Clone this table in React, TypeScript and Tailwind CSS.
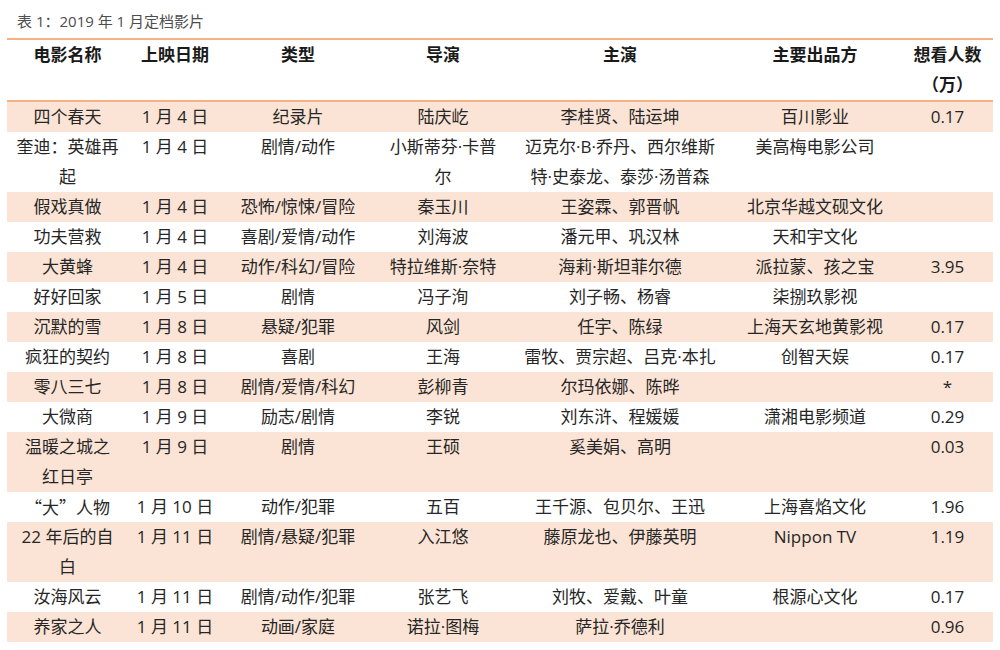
const headers = ['电影名称', '上映日期', '类型', '导演', '主演', '主要出品方', '想看人数\n（万）'];

// each row: name, date, genre, director, cast, studio, want
const rows: string[][] = [
  ['四个春天', '1 月 4 日', '纪录片', '陆庆屹', '李桂贤、陆运坤', '百川影业', '0.17'],
  ['奎迪：英雄再\n起', '1 月 4 日', '剧情/动作', '小斯蒂芬·卡普\n尔', '迈克尔·B·乔丹、西尔维斯\n特·史泰龙、泰莎·汤普森', '美高梅电影公司', ''],
  ['假戏真做', '1 月 4 日', '恐怖/惊悚/冒险', '秦玉川', '王姿霖、郭晋帆', '北京华越文砚文化', ''],
  ['功夫营救', '1 月 4 日', '喜剧/爱情/动作', '刘海波', '潘元甲、巩汉林', '天和宇文化', ''],
  ['大黄蜂', '1 月 4 日', '动作/科幻/冒险', '特拉维斯·奈特', '海莉·斯坦菲尔德', '派拉蒙、孩之宝', '3.95'],
  ['好好回家', '1 月 5 日', '剧情', '冯子洵', '刘子畅、杨睿', '柒捌玖影视', ''],
  ['沉默的雪', '1 月 8 日', '悬疑/犯罪', '风剑', '任宇、陈绿', '上海天玄地黄影视', '0.17'],
  ['疯狂的契约', '1 月 8 日', '喜剧', '王海', '雷牧、贾宗超、吕克·本扎', '创智天娱', '0.17'],
  ['零八三七', '1 月 8 日', '剧情/爱情/科幻', '彭柳青', '尔玛依娜、陈晔', '', '*'],
  ['大微商', '1 月 9 日', '励志/剧情', '李锐', '刘东浒、程媛媛', '潇湘电影频道', '0.29'],
  ['温暖之城之\n红日亭', '1 月 9 日', '剧情', '王硕', '奚美娟、高明', '', '0.03'],
  ['“大”人物', '1 月 10 日', '动作/犯罪', '五百', '王千源、包贝尔、王迅', '上海喜焰文化', '1.96'],
  ['22 年后的自\n白', '1 月 11 日', '剧情/悬疑/犯罪', '入江悠', '藤原龙也、伊藤英明', 'Nippon TV', '1.19'],
  ['汝海风云', '1 月 11 日', '剧情/动作/犯罪', '张艺飞', '刘牧、爱戴、叶童', '根源心文化', '0.17'],
  ['养家之人', '1 月 11 日', '动画/家庭', '诺拉·图梅', '萨拉·乔德利', '', '0.96'],
];

const cols = 'grid grid-cols-[121px_94px_152px_138px_216px_174px_91px]';

export default function App() {
  return (
    <div
      className="w-[1000px] h-[650px] bg-white px-[7px] text-[#262626] overflow-hidden"
      style={{ fontFamily: '"Open Sans", "Noto Sans CJK SC", sans-serif' }}
    >
      <div className="h-[38px] pl-[10px] pt-[10px] text-[15px] leading-[22px] text-[#4d4d4d]">
        表 1：2019 年 1 月定档影片
      </div>

      <div className="border-t-2 border-b-2 border-[#f4b183]">
        <div className={`${cols} text-[17px] leading-[30px] font-bold text-[#1a1a1a]`}>
          {headers.map((h) => (
            <div key={h} className="text-center whitespace-pre-line">
              {h}
            </div>
          ))}
        </div>
      </div>

      <div className="text-[17px] leading-[30px]">
        {rows.map((r, i) => (
          <div key={i} className={`${cols} ${i % 2 === 0 ? 'bg-[#fbe4d5]' : ''}`}>
            {r.map((c, j) => (
              <div
                key={j}
                className={`text-center whitespace-pre-line ${c.startsWith('“') ? "font-['Noto_Sans_CJK_SC']" : ''}`}
              >
                {c}
              </div>
            ))}
          </div>
        ))}
      </div>
    </div>
  );
}
